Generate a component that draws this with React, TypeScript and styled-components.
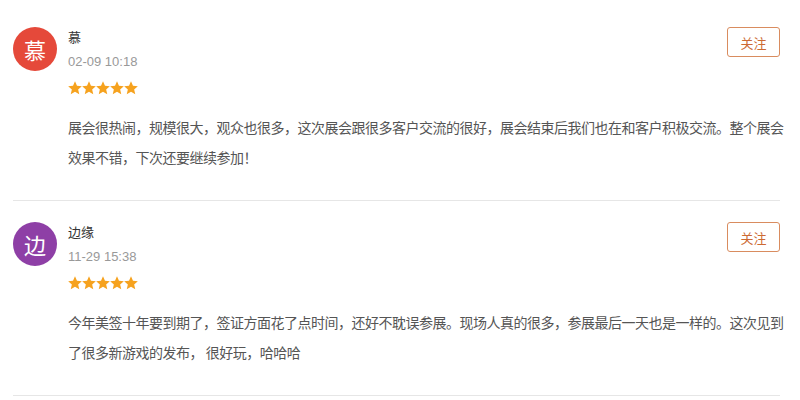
import React from "react";
import styled, { createGlobalStyle } from "styled-components";

const Global = createGlobalStyle`
  html, body { margin: 0; padding: 0; background: #fff; }
  body { font-family: "Liberation Sans", "Noto Sans CJK SC", sans-serif; }
`;

const Page = styled.div`
  width: 800px;
  padding: 6px 20px 0 13px;
  box-sizing: border-box;
`;

const List = styled.div`
  width: 767px;
  display: flex;
  flex-direction: column;
`;

const Item = styled.div`
  display: grid;
  grid-template-columns: 44px minmax(0, 1fr);
  column-gap: 11px;
  padding: 21px 0 28px;
  border-bottom: 1px solid #e6e6e6;
`;

const Avatar = styled.div<{ $bg: string }>`
  width: 44px;
  height: 44px;
  border-radius: 50%;
  background: ${(p) => p.$bg};
  color: #fff;
  display: flex;
  align-items: center;
  justify-content: center;
  font-family: "Noto Sans CJK SC", sans-serif;
  font-size: 22px;
`;

const Body = styled.div`
  display: flex;
  flex-direction: column;
  min-width: 0;
`;

const Header = styled.div`
  display: flex;
  justify-content: space-between;
  align-items: flex-start;
`;

const Info = styled.div`
  display: flex;
  flex-direction: column;
`;

const Name = styled.div`
  font-family: "Noto Sans CJK SC", sans-serif;
  font-size: 13px;
  line-height: 20px;
  color: #333;
`;

const Time = styled.div`
  margin-top: 5px;
  font-family: "Liberation Sans", sans-serif;
  font-size: 13px;
  line-height: 20px;
  color: #999;
`;

const Stars = styled.div`
  margin-top: 8px;
  display: flex;
  height: 16px;
  align-items: center;
`;

const FollowButton = styled.button`
  width: 53px;
  height: 30px;
  border: 1px solid #d98c5f;
  border-radius: 3px;
  background: #fff;
  color: #cc6a33;
  font-family: "Noto Sans CJK SC", sans-serif;
  font-size: 13px;
  padding: 0;
  cursor: pointer;
`;

const Text = styled.div`
  margin-top: 16px;
  font-family: "Noto Sans CJK SC", sans-serif;
  font-size: 14px;
  letter-spacing: -0.5px;
  color: #555;
`;

const Line = styled.div`
  line-height: 30px;
  white-space: nowrap;
`;

const Star = () => (
  <svg width="14" height="14" viewBox="0 0 24 24">
    <path
      d="M12 0.5l3.4 7.6 8.3.8-6.3 5.5 1.9 8.1L12 18.3l-7.3 4.2 1.9-8.1L0.3 8.9l8.3-.8z"
      fill="#f6a21e"
    />
  </svg>
);

type Review = {
  initial: string;
  color: string;
  name: string;
  time: string;
  lines: string[];
};

const reviews: Review[] = [
  {
    initial: "慕",
    color: "#e5493a",
    name: "慕",
    time: "02-09 10:18",
    lines: [
      "展会很热闹，规模很大，观众也很多，这次展会跟很多客户交流的很好，展会结束后我们也在和客户积极交流。整个展会",
      "效果不错，下次还要继续参加！",
    ],
  },
  {
    initial: "边",
    color: "#8e3fa6",
    name: "边缘",
    time: "11-29 15:38",
    lines: [
      "今年美签十年要到期了，签证方面花了点时间，还好不耽误参展。现场人真的很多，参展最后一天也是一样的。这次见到",
      "了很多新游戏的发布， 很好玩，哈哈哈",
    ],
  },
];

export default function App() {
  return (
    <>
      <Global />
      <Page>
        <List>
          {reviews.map((r) => (
            <Item key={r.time}>
              <Avatar $bg={r.color}>{r.initial}</Avatar>
              <Body>
                <Header>
                  <Info>
                    <Name>{r.name}</Name>
                    <Time>{r.time}</Time>
                    <Stars>
                      {[0, 1, 2, 3, 4].map((i) => (
                        <Star key={i} />
                      ))}
                    </Stars>
                  </Info>
                  <FollowButton>关注</FollowButton>
                </Header>
                <Text>
                  {r.lines.map((l, i) => (
                    <Line key={i}>{l}</Line>
                  ))}
                </Text>
              </Body>
            </Item>
          ))}
        </List>
      </Page>
    </>
  );
}
